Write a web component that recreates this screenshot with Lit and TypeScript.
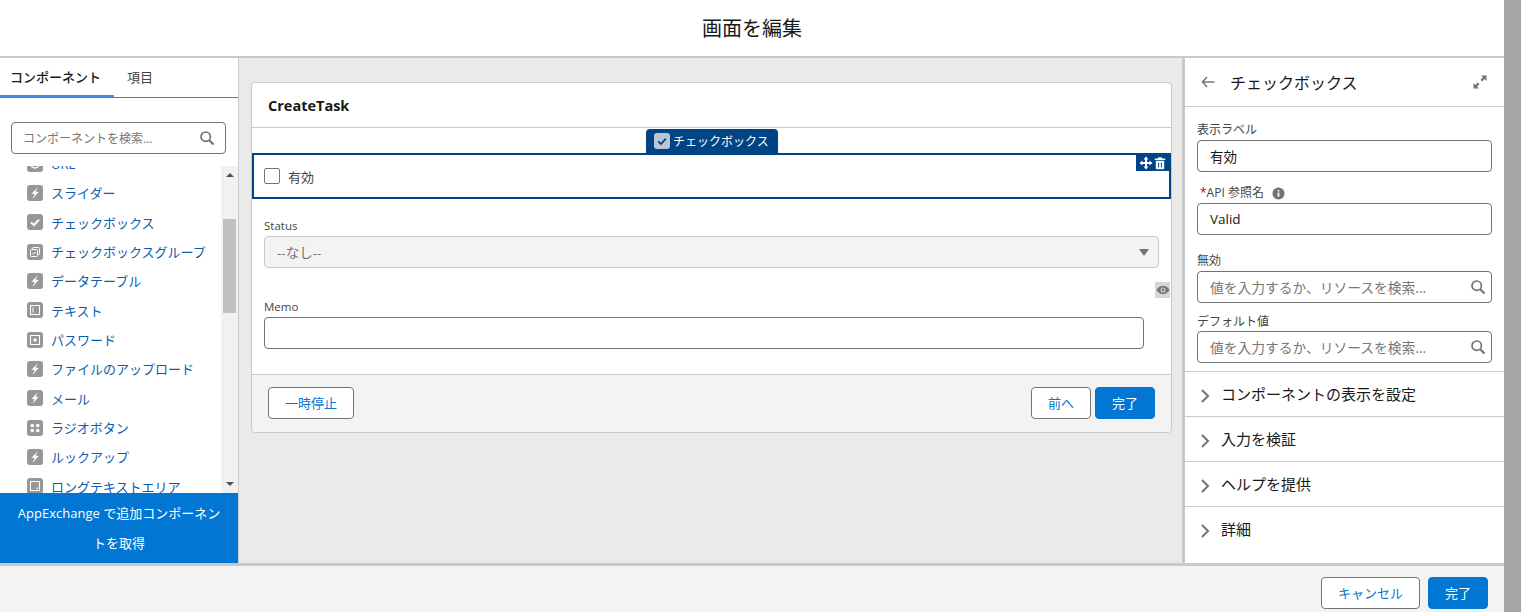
import { LitElement, html, css, svg } from "lit";
import { customElement } from "lit/decorators.js";

const bolt = svg`<path d="M10.700 2 4.500 9h3L5.600 14l6-7.200H8.600z" fill="#fff"/>`;
const check = svg`<path d="M4 8.400 7 11l5-5.400" fill="none" stroke="#fff" stroke-width="2"/>`;
const group = svg`<rect x="5.500" y="3.500" width="7" height="7" rx="1" fill="none" stroke="#fff"/><rect x="3.500" y="5.500" width="7" height="7" rx="1" fill="#979797" stroke="#fff"/><path d="m5.300 9 1.300 1.200 2.200-2.400" fill="none" stroke="#fff"/>`;
const text = svg`<rect x="3.500" y="3.500" width="9" height="9" fill="none" stroke="#fff"/><path d="M6 5.500v5" stroke="#fff"/>`;
const pass = svg`<rect x="3.500" y="3.500" width="9" height="9" fill="none" stroke="#fff"/><path d="m8 5.400.7 1.700 1.700.1-1.300 1.100.5 1.800L8 9.200l-1.600.9.500-1.800-1.300-1.100 1.700-.1z" fill="#fff"/>`;
const radio = svg`<rect x="3.500" y="4" width="3.500" height="3.200" rx="1.400" fill="#fff"/><rect x="9" y="4" width="3.500" height="3.200" rx="1.400" fill="#fff"/><rect x="3.500" y="9" width="3.500" height="3.200" rx="1.400" fill="#fff"/><rect x="9" y="9" width="3.500" height="3.200" rx="1.400" fill="#fff"/>`;
const area = svg`<rect x="3.500" y="3.500" width="9" height="9" fill="none" stroke="#fff"/><path d="M9 11h2V9z" fill="#fff"/>`;
const url = svg`<circle cx="8" cy="8" r="4" fill="none" stroke="#fff" stroke-width="1.500"/>`;

const ITEMS = [
  ["URL", url], ["スライダー", bolt], ["チェックボックス", check], ["チェックボックスグループ", group],
  ["データテーブル", bolt], ["テキスト", text], ["パスワード", pass], ["ファイルのアップロード", bolt],
  ["メール", bolt], ["ラジオボタン", radio], ["ルックアップ", bolt], ["ロングテキストエリア", area],
] as const;

const searchIcon = html`<svg class="search" viewBox="0 0 16 16" width="16" height="16"><circle cx="6.700" cy="6.700" r="4.700" fill="none" stroke="#747474" stroke-width="1.700"/><path d="m10.200 10.200 4.300 4.300" stroke="#747474" stroke-width="2.200"/></svg>`;
const chevron = html`<svg class="chev" viewBox="0 0 10 16" width="10" height="16"><path d="m2 2 6 6-6 6" fill="none" stroke="#747474" stroke-width="2"/></svg>`;

@customElement("app-root")
export class AppRoot extends LitElement {
  static styles = css`
    :host { display: block; width: 1521px; height: 612px; overflow: hidden; background: #a5a5a5;
      font-family: "Open Sans", "Noto Sans CJK JP", sans-serif; color: #181818; font-size: 13px; }
    * { box-sizing: border-box; }
    .page { width: 1504px; height: 612px; display: flex; flex-direction: column; background: #fff; }
    .title { height: 58px; flex: none; border-bottom: 2px solid #c9c9c9; display: flex; align-items: center; justify-content: center;
      font-size: 20px; padding-bottom: 1px; }
    .body { flex: 1; min-height: 0; display: flex; }
    .foot { height: 49px; flex: none; background: #f3f3f3; border-top: 3px solid #c9c9c9; display: flex; justify-content: flex-end; gap: 8px; padding: 11px 16px 0 0; }
    .btn { height: 32px; border-radius: 4px; border: 1px solid #747474; background: #fff; color: #0176d3; display: flex; align-items: center; justify-content: center; font-size: 13px; padding-bottom: 1px; }
    .btn.brand { background: #0176d3; border-color: #0176d3; color: #fff; }
    .cancel { width: 99px; } .done { width: 60px; }

    .left { width: 239px; flex: none; display: flex; flex-direction: column; border-right: 1px solid #c9c9c9; }
    .tabs { height: 40px; flex: none; display: flex; border-bottom: 1px solid #747474; }
    .tab { height: 40px; padding: 0 12px 0 10px; display: flex; align-items: center; font-size: 13px; color: #444; padding-bottom: 3px; }
    .tab.on { width: 114px; border-bottom: 3px solid #3b8de8; color: #181818; font-weight: 500; padding-top: 3px; }
    .tab.on + .tab { padding-left: 13px; }
    .search-wrap { height: 68px; flex: none; padding: 24px 12px 0 11px; }
    .input { height: 32px; border: 1px solid #747474; border-radius: 4px; background: #fff; display: flex; align-items: center; justify-content: space-between; padding: 0 10px 0 11px; font-size: 12px; color: #181818; }
    .ph { color: #777; white-space: nowrap; }
    .search { flex: none; }
    .listbox { flex: 1; min-height: 0; overflow: hidden; display: flex; }
    .list { flex: 1; min-width: 0; overflow: hidden; padding-left: 27px; }
    .item { height: 29.33px; display: flex; align-items: center; gap: 8px; color: #0b5cab; font-size: 13px; white-space: nowrap; }
    .item:first-child { margin-top: -17px; }
    .ic { width: 16px; height: 16px; flex: none; background: #979797; border-radius: 3px; display: block; }
    .sb { width: 17px; flex: none; background: #f1f1f1; display: flex; flex-direction: column; align-items: center; padding-top: 7px; }
    .arrow { width: 0; height: 0; border-left: 4px solid transparent; border-right: 4px solid transparent; flex: none; }
    .arrow.up { border-bottom: 4px solid #505050; }
    .arrow.down { border-top: 4px solid #505050; margin-bottom: 7px; }
    .thumb { width: 13px; height: 94px; background: #c1c1c1; flex: none; margin-top: 42px; margin-bottom: auto; }
    .promo { height: 70px; flex: none; background: #0176d3; color: #fff; text-align: center; font-size: 13px; line-height: 30px; padding: 5px 13px 0; }

    .canvas { flex: 1; min-width: 0; background: #ebeae8; padding: 24px 10px 0 12px; }
    .card { position: relative; height: 351px; background: #fff; border: 1px solid #c9c9c9; border-radius: 4px; display: flex; flex-direction: column; overflow: visible; }
    .card-head { height: 45px; flex: none; border-bottom: 1px solid #c9c9c9; display: flex; align-items: center; padding-left: 16px; font-weight: 700; font-size: 14.5px; color: #181818; }
    .card-body { flex: 1; padding-top: 25px; }
    .sel { position: relative; height: 46px; border: 2px solid #014486; display: flex; align-items: center; padding: 0 0 0 10px; gap: 8px; font-size: 13px; color: #444; }
    .cb { width: 16px; height: 16px; border: 1px solid #747474; border-radius: 2px; background: #fff; flex: none; }
    .pill { position: absolute; left: 394px; top: 46px; width: 132px; height: 24px; background: #014486; border-radius: 4px 4px 0 0; color: #fff; display: flex; align-items: center; padding-left: 8px; gap: 3px; font-size: 12px; }
    .pill svg { background: #b8c6d6; border-radius: 3px; }
    .handle { position: absolute; right: -1px; top: -1px; width: 34px; height: 17px; background: #014486; display: flex; align-items: center; justify-content: center; gap: 0; }
    .f { padding: 0 12px; }
    .lbl { font-size: 11.5px; color: #444; line-height: 16px; }
    .status { margin-top: 19px; }
    .select { height: 32px; margin-top: 2px; width: 895px; background: #f3f3f3; border: 1px solid #c9c9c9; border-radius: 4px; color: #747474; display: flex; align-items: center; justify-content: space-between; padding: 0 9px 0 12px; font-size: 13.5px; }
    .tri { width: 0; height: 0; border-left: 5.5px solid transparent; border-right: 5.5px solid transparent; border-top: 7px solid #747474; }
    .memo { margin-top: 31px; }
    .memo .box { height: 32px; width: 880px; margin-top: 2px; border: 1px solid #747474; border-radius: 4px; }
    .eye { position: absolute; right: 1px; top: 199px; width: 15px; height: 16px; background: #d6d6d6; display: flex; align-items: center; justify-content: center; }
    .card-foot { height: 58px; flex: none; background: #f3f3f3; border-top: 1px solid #c9c9c9; border-radius: 0 0 4px 4px; display: flex; align-items: flex-start; padding: 12px 16px 0; gap: 4px; }
    .pause { width: 86px; margin-right: auto; } .prev { width: 60px; }

    .right { width: 322px; flex: none; border-left: 3px solid #c9c9c9; display: flex; flex-direction: column; }
    .rhead { height: 49px; flex: none; border-bottom: 1px solid #c9c9c9; display: flex; align-items: center; padding: 0 17px 0 16px; font-size: 16px; gap: 15px; }
    .rhead .exp { margin-left: auto; }
    .props { flex: none; height: 264px; padding: 15px 12px 0; display: flex; flex-direction: column; }
    .props .lbl { font-size: 12px; height: 16px; }
    .props .input { margin-top: 2px; font-size: 13.5px; padding: 0 5px 0 12px; }
    .props .ph { font-size: 13.75px; }
    .req { color: #ba0517; padding-left: 3px; }
    .api { display: flex; align-items: center; gap: 8px; margin-top: 13px; }
    .props .m1 { margin-top: 18px; }
    .props .m2 { margin-top: 10px; padding-top: 1px; }
    .sec { height: 45px; flex: none; border-top: 1px solid #c9c9c9; display: flex; align-items: center; padding: 0 0 2px 15px; gap: 11px; font-size: 15px; }
    .chev { flex: none; margin-top: 6px; }
  `;

  render() {
    return html`<div class="page">
      <div class="title">画面を編集</div>
      <div class="body">
        <div class="left">
          <div class="tabs"><div class="tab on">コンポーネント</div><div class="tab">項目</div></div>
          <div class="search-wrap"><div class="input"><span class="ph">コンポーネントを検索...</span>${searchIcon}</div></div>
          <div class="listbox">
            <div class="list">
              ${ITEMS.map(([n, ic]) => html`<div class="item"><svg class="ic" viewBox="0 0 16 16">${ic}</svg><span>${n}</span></div>`)}
            </div>
            <div class="sb"><div class="arrow up"></div><div class="thumb"></div><div class="arrow down"></div></div>
          </div>
          <div class="promo">AppExchange で追加コンポーネントを取得</div>
        </div>
        <div class="canvas">
          <div class="card">
            <div class="card-head">CreateTask</div>
            <div class="card-body">
              <div class="sel">
                <div class="cb"></div><span>有効</span>
                <div class="handle">
                  <svg viewBox="0 0 14 14" width="14" height="14"><path d="M7 .5 9.500 3.400H8v2.600h2.600V4.500L13.500 7l-2.900 2.500V8H8v2.600h1.500L7 13.500l-2.500-2.900H6V8H3.400v1.500L.5 7l2.900-2.500V6H6V3.400H4.500z" fill="#fff"/></svg>
                  <svg viewBox="0 0 14 14" width="14" height="14"><path d="M1.800 2.400h3.400V1.200h3.600v1.200h3.400v1.500H1.800zM2.800 4.800h8.400v7.400a1 1 0 0 1-1 1H3.800a1 1 0 0 1-1-1z" fill="#fff"/><path d="M5.600 6.800v4.500M8.400 6.800v4.500" stroke="#014486" stroke-width="1"/></svg>
                </div>
              </div>
              <div class="f status"><div class="lbl">Status</div><div class="select"><span>--なし--</span><span class="tri"></span></div></div>
              <div class="f memo"><div class="lbl">Memo</div><div class="box"></div></div>
            </div>
            <div class="card-foot">
              <div class="btn pause">一時停止</div><div class="btn prev">前へ</div><div class="btn brand done">完了</div>
            </div>
            <div class="pill"><svg viewBox="0 0 16 16" width="16" height="16"><path d="M4.200 8.400 7 11l4.800-5.400" fill="none" stroke="#014486" stroke-width="1.800"/></svg><span>チェックボックス</span></div>
            <div class="eye"><svg viewBox="0 0 14 10" width="14" height="10"><path d="M7 .8C4 .8 1.600 3 .5 5c1.100 2 3.500 4.200 6.500 4.200S12.400 7 13.500 5C12.400 3 10 .8 7 .8z" fill="#747474"/><circle cx="7" cy="5" r="2.500" fill="#d6d6d6"/><circle cx="7" cy="5" r="1.400" fill="#747474"/></svg></div>
          </div>
        </div>
        <div class="right">
          <div class="rhead">
            <svg viewBox="0 0 14 12" width="14" height="12"><path d="M6 1 1.500 6 6 11M1.800 6H13.500" fill="none" stroke="#747474" stroke-width="1.500"/></svg>
            <span>チェックボックス</span>
            <svg class="exp" viewBox="0 0 14 14" width="14" height="14"><path d="M8 .5h5.500V6L11.600 4.100 9.200 6.500 7.500 4.800 9.900 2.400zM6 13.500H.5V8l1.900 1.900 2.400-2.400 1.700 1.700-2.400 2.400z" fill="#747474"/></svg>
          </div>
          <div class="props">
            <div class="lbl">表示ラベル</div>
            <div class="input"><span class="val">有効</span></div>
            <div class="lbl api"><span><span class="req">*</span>API 参照名</span><svg viewBox="0 0 14 14" width="13" height="13"><circle cx="7" cy="7" r="6.500" fill="#747474"/><path d="M7 6v4.500M7 3.200v1.600" stroke="#fff" stroke-width="1.800"/></svg></div>
            <div class="input"><span class="val">Valid</span></div>
            <div class="lbl m1">無効</div>
            <div class="input"><span class="ph">値を入力するか、リソースを検索...</span>${searchIcon}</div>
            <div class="lbl m2">デフォルト値</div>
            <div class="input"><span class="ph">値を入力するか、リソースを検索...</span>${searchIcon}</div>
          </div>
          <div class="sec">${chevron}<span>コンポーネントの表示を設定</span></div>
          <div class="sec">${chevron}<span>入力を検証</span></div>
          <div class="sec">${chevron}<span>ヘルプを提供</span></div>
          <div class="sec">${chevron}<span>詳細</span></div>
        </div>
      </div>
      <div class="foot"><div class="btn cancel">キャンセル</div><div class="btn brand done">完了</div></div>
    </div>`;
  }
}
